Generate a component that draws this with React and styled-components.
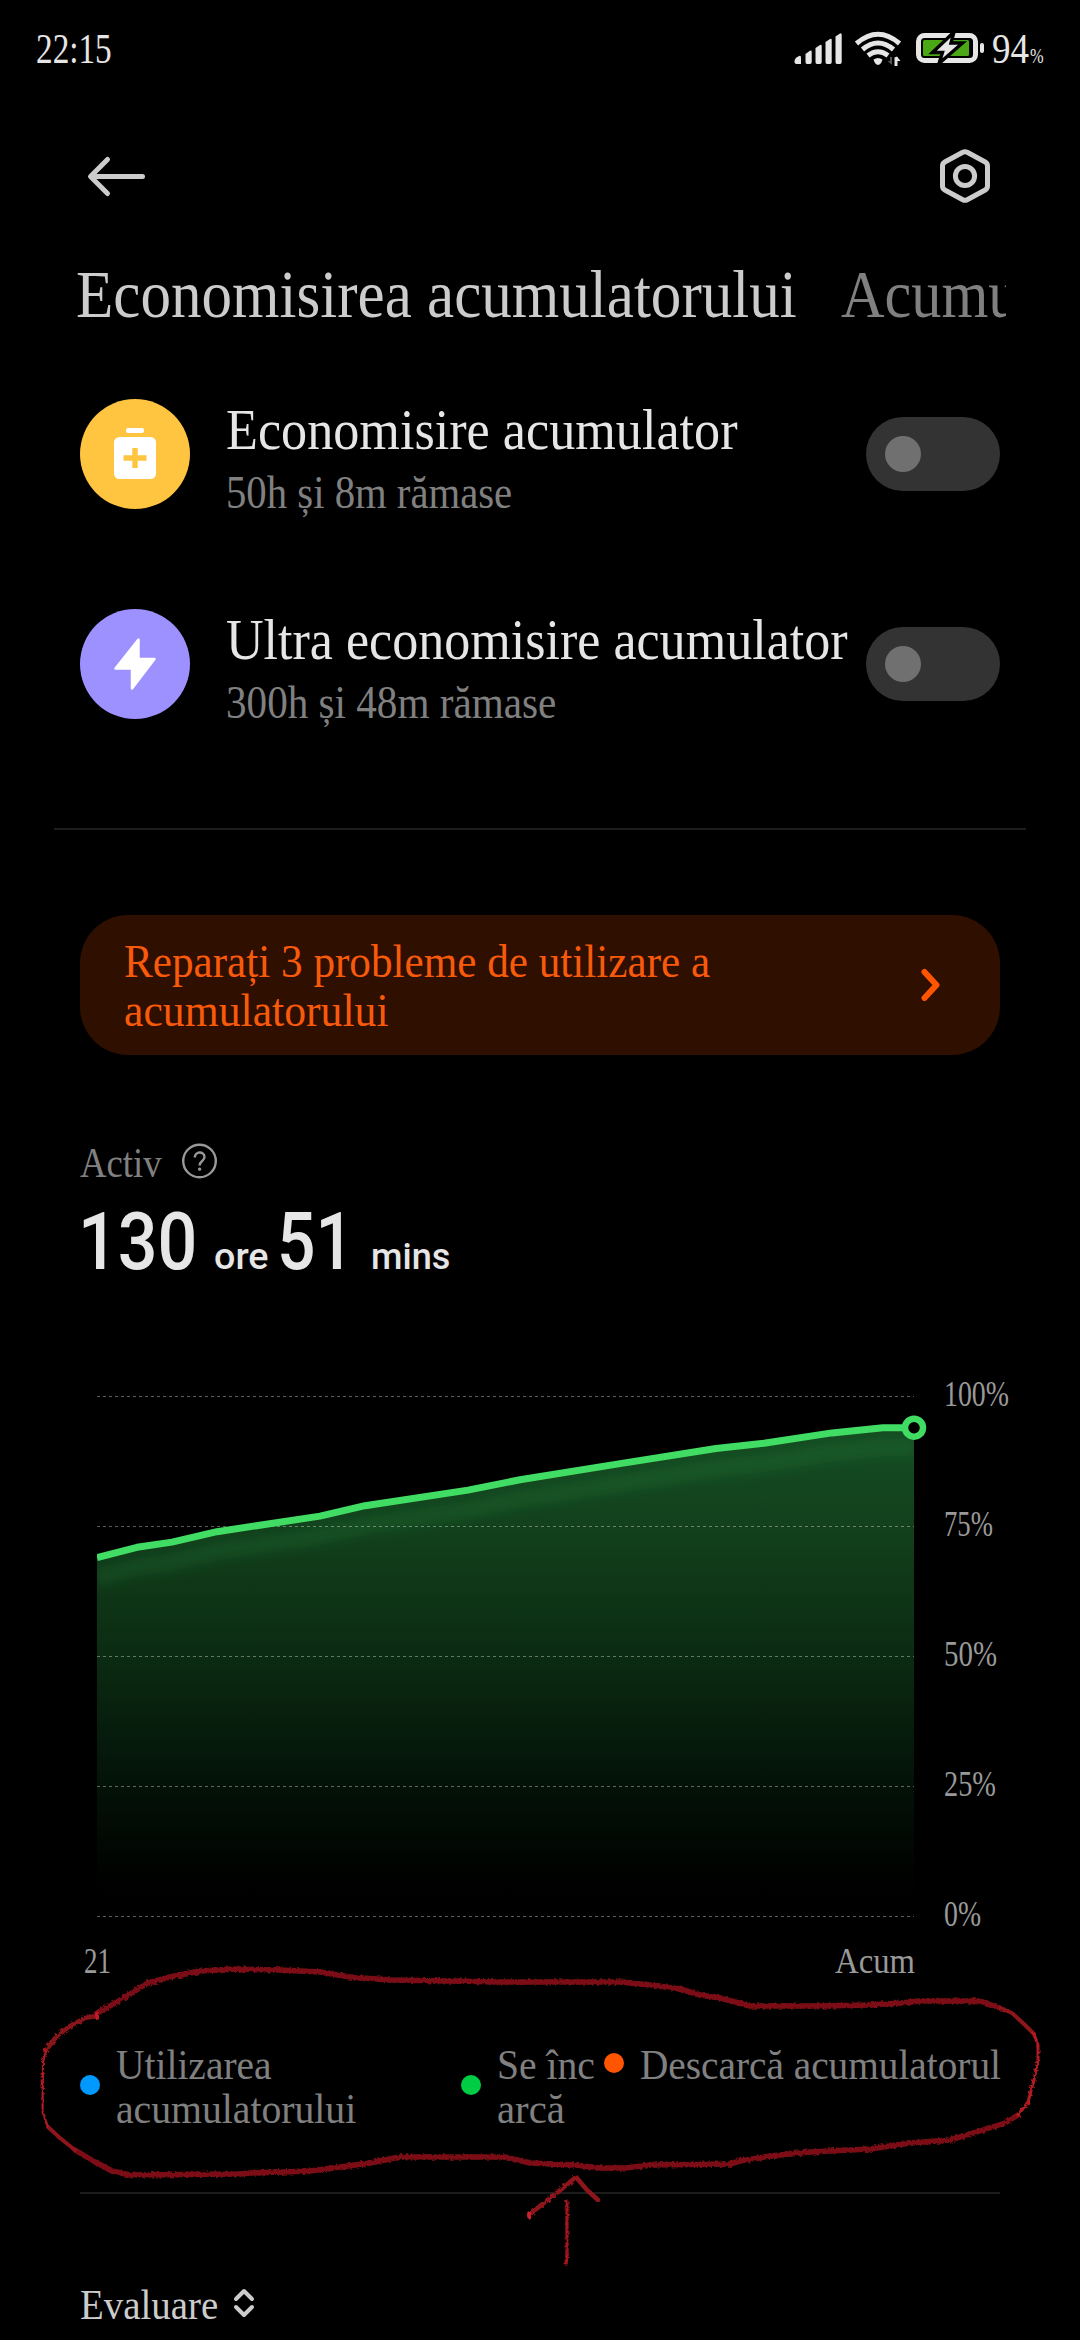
import React, { useLayoutEffect, useRef, useState } from 'react';
import styled, { createGlobalStyle } from 'styled-components'


const GlobalStyle = createGlobalStyle`
  * {
    box-sizing: border-box;
  }
  body {
    margin: 0;
    background: #000;
  }
`;

const Screen = styled.div`
  position: relative;
  width: 1080px;
  height: 2340px;
  overflow: hidden;
  display: flex;
  flex-direction: column;
  background: #000;
  color: #ccc;
  font-family: "Liberation Serif", serif;
`;

const FitBox = styled.div`
  flex: none;
  width: ${({ $width }) => $width}px;
  font-size: ${({ $size }) => $size}px;
  line-height: ${({ $line }) => $line}px;
  color: ${({ $color }) => $color || 'inherit'};
  white-space: nowrap;

  span {
    display: inline-block;
    transform-origin: left center;
  }
`;

// condenses a line of text to a given width
const Fit = ({ width, size, line, color, children }) => {
  const ref = useRef(null)
  const [scale, setScale] = useState(1)

  useLayoutEffect(() => {
    setScale(width / ref.current.offsetWidth)
  }, [width, children])

  return (
    <FitBox $width={width} $size={size} $line={line} $color={color}>
      <span ref={ref} style={{ transform: `translateY(1.5px) scaleX(${scale})` }}>{children}</span>
    </FitBox>
  )
}

const StatusBar = styled.div`
  flex: none;
  display: flex;
  align-items: center;
  justify-content: space-between;
  height: 94px;
  padding: 0 36px;
  color: #e6e6e6;
`;

const StatusRight = styled.div`
  display: flex;
  align-items: center;
  gap: 7px;
`;

const Percent = styled.div`
  display: flex;
  align-items: baseline;
  gap: 1px;
`;

const Header = styled.header`
  flex: none;
  display: flex;
  align-items: center;
  justify-content: space-between;
  height: 159px;
  padding: 5px 89px 0 86px;

  svg {
    display: block;
  }
`;

const Tabs = styled.nav`
  flex: none;
  display: flex;
  gap: 44px;
  height: 79px;
  margin: 0 74px 0 76px;
  overflow: hidden;
`;

const Modes = styled.div`
  flex: none;
  display: flex;
  flex-direction: column;
  gap: 100px;
  padding: 67px 80px 0;
`;

const ModeRow = styled.div`
  display: flex;
  align-items: center;
  height: 110px;
`;

const ModeIcon = styled.div`
  width: 110px;
  height: 110px;
  border-radius: 50%;
  background: ${({ $color }) => $color};
`;

const ModeText = styled.div`
  align-self: flex-start;
  display: flex;
  flex-direction: column;
  gap: 9px;
  margin-left: 36px;
`;

const Toggle = styled.div`
  display: flex;
  align-items: center;
  width: 134px;
  height: 74px;
  margin-left: auto;
  padding-left: 19px;
  border-radius: 37px;
  background: #333;

  &::before {
    content: '';
    width: 36px;
    height: 36px;
    border-radius: 50%;
    background: #707070;
  }
`;

const Divider = styled.div`
  flex: none;
  height: 2px;
  margin: ${({ $margin }) => $margin};
  background: #1c1c1c;
`;

const Warning = styled.div`
  flex: none;
  display: flex;
  align-items: center;
  justify-content: space-between;
  height: 140px;
  margin: 85px 80px 0;
  padding: 0 57px 3px 44px;
  border-radius: 48px;
  background: #2e0f00;
  color: #f85a0c;
`;

const ActiveRow = styled.div`
  flex: none;
  display: flex;
  align-items: center;
  gap: 20px;
  height: 46px;
  margin-top: 83px;
  padding-left: 80px;
`;

const Duration = styled.div`
  flex: none;
  display: flex;
  align-items: baseline;
  height: 84px;
  margin-top: 14px;
  padding-left: 78px;
  color: #e6e6e6;
  font-family: Roboto, sans-serif;
  font-weight: 500;
`;

const Unit = styled.div`
  padding: 0 ${({ $after }) => $after}px 0 17px;
`;

const Chart = styled.div`
  flex: none;
  display: flex;
  height: 560px;
  margin-top: 90px;
  padding-left: 80px;
`;

const Scale = styled.div`
  display: flex;
  flex-direction: column;
  justify-content: space-between;
  color: #999;
`;

const TimeAxis = styled.div`
  flex: none;
  display: flex;
  justify-content: space-between;
  padding: 0 165px 0 84px;
  color: #999;
`;

const Legend = styled.div`
  flex: none;
  display: grid;
  grid-template-columns: 381px 143px 1fr;
  align-items: start;
  margin-top: 54px;
  padding: 0 79px 0 80px;
  color: #808080;
`;

const LegendItem = styled.div`
  display: flex;
  align-items: center;
  gap: 16px;

  &::before {
    content: '';
    flex: none;
    width: 20px;
    height: 20px;
    border-radius: 50%;
    background: ${({ $color }) => $color};
  }
`;

const SortRow = styled.div`
  flex: none;
  display: flex;
  align-items: center;
  gap: 15px;
  margin-top: 84px;
  padding-left: 80px;
`;

const Marker = styled.svg`
  position: absolute;
  left: 0;
  top: 1940px;
  pointer-events: none;
`;


const StatusIcons = () => (
  <svg width="192" height="40" viewBox="794 27 192 40">
    <g fill="#e6e6e6">
      <path d="M795.5 61 Q795.5 59 797.5 57.5 L800 56 Q802 55 802 57.5 V64 H797.5 Q795.5 64 795.5 62Z" />
      <path d="M806.5 54 L811 50.8 Q812.7 50 812.7 52 V62 Q812.7 64 811 64 H808 Q806.5 64 806.5 62Z" />
      <path d="M816.5 48 L821 45 Q822.7 44.2 822.7 46 V62 Q822.7 64 821 64 H818 Q816.5 64 816.5 62Z" />
      <path d="M826.5 42 L831 39 Q832.7 38.2 832.7 40 V62 Q832.7 64 831 64 H828 Q826.5 64 826.5 62Z" />
      <path d="M836.5 36.5 L841 33.5 Q842.7 32.7 842.7 35 V62 Q842.7 64 841 64 H838 Q836.5 64 836.5 62Z" />
      <path d="M874.5 59.5 Q879 56.5 883.5 59.5 Q882 64.5 879 65 Q876 64.5 874.5 59.5Z" />
      <path d="M898 56.5 L901.5 61 H898.5 V66 H895.5 V57.5Z" />
      <rect x="981" y="43" width="4" height="10" rx="2" />
    </g>
    <path d="M893 57 V65 L888.5 61 H891 V57Z" fill="#555" />
    <g fill="none" stroke="#e6e6e6" strokeWidth="5">
      <path d="M857.5 43.5 Q879 25 900.5 43.5" />
      <path d="M863.5 49.5 Q879 36.5 894.5 49.5" />
      <path d="M869 55.5 Q879 48 889 55.5" />
    </g>
    <rect x="919.5" y="35.5" width="57" height="25" rx="6" fill="none" stroke="#e6e6e6" strokeWidth="5" />
    <rect x="924" y="40" width="46" height="16" rx="1.5" fill="#49a813" />
    <path d="M955 32 L933.5 52.5 H943.5 L940 63.5 L963.5 43 H952Z" fill="#e6e6e6" stroke="#000" strokeWidth="3.4" />
  </svg>
)

const BackIcon = () => (
  <svg width="60" height="44" viewBox="86 154 60 44" fill="none" stroke="#ccc" strokeWidth="5" strokeLinecap="round" strokeLinejoin="round">
    <path d="M107.5 159.5 L90.5 176.5 L107.5 193.5 M91 176.5 H142.5" />
  </svg>
)

const SettingsIcon = () => (
  <svg width="52" height="56" viewBox="938 148 52 56" fill="none" stroke="#ccc" strokeWidth="5">
    <path d="M961.8 152.3 Q964 151.1 966.2 152.3 L984.2 162 Q986.5 163.3 986.5 166 V186 Q986.5 188.7 984.2 190 L966.2 199.7 Q964 200.9 961.8 199.7 L943.8 190 Q941.5 188.7 941.5 186 V166 Q941.5 163.3 943.8 162Z" />
    <circle cx="964" cy="176" r="9.6" />
  </svg>
)

const SaverGlyph = () => (
  <svg width="110" height="110">
    <rect x="46" y="29" width="18" height="5" rx="2" fill="#fff" />
    <rect x="34" y="38" width="42" height="42" rx="5.5" fill="#fff" />
    <path d="M43.5 59 H66.5 M55 49 V69" stroke="#ffc540" strokeWidth="5.4" />
  </svg>
)

const BoltGlyph = () => (
  <svg width="110" height="110">
    <path d="M58.5 30.5 V50 H74.5 L52 79.5 V59.5 H35.5Z" fill="#fff" stroke="#fff" strokeWidth="2.5" strokeLinejoin="round" />
  </svg>
)

const modes = [
  {
    title: 'Economisire acumulator', titleWidth: 512,
    left: '50h și 8m rămase', leftWidth: 286,
    color: '#ffc540', icon: <SaverGlyph />,
  },
  {
    title: 'Ultra economisire acumulator', titleWidth: 622,
    left: '300h și 48m rămase', leftWidth: 330,
    color: '#9c91ff', icon: <BoltGlyph />,
  },
]

const scale = [['100%', 65], ['75%', 49], ['50%', 53], ['25%', 52], ['0%', 37]]

// [x in the chart, battery level]
const levels = [
  [17, 69], [57, 71], [92, 72], [137, 74], [240, 77], [285, 79], [388, 82],
  [440, 84], [537, 87], [636, 90], [684, 91], [752, 93], [803, 94], [834, 94],
]

const levelY = (level) => 544.5 - level * 5.2

const LevelChart = () => {
  const line = 'M' + levels.map(([x, level]) => `${x} ${levelY(level)}`).join(' L')
  const area = `${line} V544.5 H17Z`

  return (
    <svg width="864" height="560">
      <defs>
        <linearGradient id="area" gradientUnits="userSpaceOnUse" x1="0" y1="55" x2="0" y2="544">
          <stop offset="0" stopColor="#154d22" />
          <stop offset="0.2" stopColor="#12411c" />
          <stop offset="0.47" stopColor="#0b2b12" />
          <stop offset="0.74" stopColor="#031107" />
          <stop offset="0.93" stopColor="#000100" />
          <stop offset="1" stopColor="#000" />
        </linearGradient>
        <clipPath id="under">
          <path d={area} />
        </clipPath>
        <clipPath id="plot">
          <rect x="17" y="0" width="847" height="560" />
        </clipPath>
        <filter id="soft" x="-10%" y="-30%" width="120%" height="160%">
          <feGaussianBlur stdDeviation="5" />
        </filter>
      </defs>
      <path d={area} fill="url(#area)" />
      <g clipPath="url(#under)">
        <path d={line} transform="translate(0 20)" fill="none" stroke="#3cdc64" strokeOpacity="0.09" strokeWidth="18" filter="url(#soft)" />
      </g>
      {scale.map(([label], i) => (
        <path key={label} d={`M17 ${24.5 + i * 130} H834`} stroke="#fff" strokeOpacity="0.36" strokeDasharray="3 3" />
      ))}
      <path d={line} clipPath="url(#plot)" fill="none" stroke="#41dc64" strokeWidth="7" strokeLinejoin="round" />
      <circle cx="834" cy={levelY(94)} r="9" fill="#000" stroke="#41dc64" strokeWidth="6.5" />
    </svg>
  )
}

// hand drawn loop and arrow over the legend
const RedMarker = () => (
  <Marker width="1080" height="400" viewBox="0 1940 1080 400" fill="none" strokeLinecap="round" strokeLinejoin="round">
    <defs>
      <filter id="rough" filterUnits="userSpaceOnUse" x="0" y="1940" width="1080" height="400">
        <feTurbulence type="fractalNoise" baseFrequency="0.35" numOctaves="2" seed="4" result="noise" />
        <feDisplacementMap in="SourceGraphic" in2="noise" scale="4" />
      </filter>
    </defs>
    <g filter="url(#rough)">
      <path
        d="M97 2013 L110 2006 L130 1994 L148 1983 L170 1977 L200 1971 L235 1969 L280 1970 L320 1972 L350 1977 L390 1980 L450 1981 L500 1982 L620 1982 L650 1985 L680 1989 L700 1995 L720 1998 L750 2006 L820 2006 L870 2005 L900 2003 L920 2001 L980 2001 L1000 2008"
        stroke="#7c1116" strokeWidth="5.5"
      />
      <path
        d="M1018 2115 L1005 2123 L980 2131 L950 2140 L910 2143 L870 2149 L810 2152 L770 2156 L740 2161 L730 2164 L650 2165 L625 2168 L600 2168 L575 2165 L530 2163 L505 2157 L400 2157 L370 2163 L310 2171 L250 2173 L240 2174 L130 2175 L112 2171 L95 2162 L75 2150"
        stroke="#7c1116" strokeWidth="5.5"
      />
      <path d="M96 2016 L85 2018 L70 2026 L57 2036 L46 2050" stroke="#86131a" strokeWidth="4.5" />
      <path d="M1000 2008 L1012 2013 L1025 2025 L1034 2034" stroke="#8c141b" strokeWidth="4" />
      <path d="M75 2150 L60 2138 L48 2127" stroke="#8c141b" strokeWidth="4" />
      <path d="M46 2050 L43 2062 L42.5 2112 L48 2127" stroke="#b01a22" strokeWidth="2.2" />
      <path d="M1034 2034 L1038 2045 L1038 2060 L1034 2080 L1028 2102 L1018 2115" stroke="#b01a22" strokeWidth="3" />
      <path d="M97 2014 V2018" stroke="#c41c26" strokeWidth="4" />
      <path d="M529 2215 L545 2202 L558 2192 L576 2177 L587 2190 L598 2200" stroke="#8c141b" strokeWidth="4.5" />
      <path d="M529 2213 V2217" stroke="#d0202a" strokeWidth="3.5" />
      <path d="M567 2201 V2255 L566 2264" stroke="#a4181f" strokeWidth="3.2" />
    </g>
  </Marker>
)


const App = () => {

  return (
    <Screen>
      <GlobalStyle />
      <StatusBar>
        <Fit width={76} size={42} line={94}>22:15</Fit>
        <StatusRight>
          <StatusIcons />
          <Percent>
            <Fit width={37} size={43} line={94}>94</Fit>
            <Fit width={14} size={21} line={30}>%</Fit>
          </Percent>
        </StatusRight>
      </StatusBar>

      <Header>
        <BackIcon />
        <SettingsIcon />
      </Header>

      <Tabs>
        <Fit width={721} size={67} line={79}>Economisirea acumulatorului</Fit>
        <Fit width={288} size={67} line={79} color="#808080">Acumulator</Fit>
      </Tabs>

      <Modes>
        {modes.map((mode) => (
          <ModeRow key={mode.title}>
            <ModeIcon $color={mode.color}>{mode.icon}</ModeIcon>
            <ModeText>
              <Fit width={mode.titleWidth} size={58} line={57} color="#e6e6e6">{mode.title}</Fit>
              <Fit width={mode.leftWidth} size={46} line={52} color="#808080">{mode.left}</Fit>
            </ModeText>
            <Toggle />
          </ModeRow>
        ))}
      </Modes>

      <Divider $margin="109px 54px 0" />

      <Warning>
        <div>
          <Fit width={586} size={47} line={49}>Reparați 3 probleme de utilizare a</Fit>
          <Fit width={265} size={47} line={49}>acumulatorului</Fit>
        </div>
        <svg width="24" height="34" fill="none" stroke="#ff5500" strokeWidth="6" strokeLinecap="round" strokeLinejoin="round">
          <path d="M5.5 5 L17.5 18 L5.5 31" />
        </svg>
      </Warning>

      <ActiveRow>
        <Fit width={82} size={43} line={46} color="#808080">Activ</Fit>
        <svg width="36" height="36" fill="none" stroke="#999" strokeWidth="2.4">
          <circle cx="17.5" cy="18" r="16.3" />
          <path d="M12.8 14.5 C12.8 8 22.5 8 22.5 14 C22.5 18 17.6 18 17.6 22.5" />
          <circle cx="17.6" cy="26.2" r="1.6" fill="#999" stroke="none" />
        </svg>
      </ActiveRow>

      <Duration>
        <Fit width={119} size={80} line={84}>130</Fit>
        <Unit $after={8}><Fit width={55} size={37} line={40}>ore</Fit></Unit>
        <Fit width={77} size={80} line={84}>51</Fit>
        <Unit $after={0}><Fit width={79} size={37} line={40}>mins</Fit></Unit>
      </Duration>

      <Chart>
        <LevelChart />
        <Scale>
          {scale.map(([label, width]) => (
            <Fit key={label} width={width} size={36} line={40}>{label}</Fit>
          ))}
        </Scale>
      </Chart>
      <TimeAxis>
        <Fit width={27} size={36} line={55}>21</Fit>
        <Fit width={80} size={36} line={55}>Acum</Fit>
      </TimeAxis>

      <Legend>
        <LegendItem $color="#0099ff">
          <div>
            <Fit width={156} size={42} line={44}>Utilizarea</Fit>
            <Fit width={240} size={42} line={44}>acumulatorului</Fit>
          </div>
        </LegendItem>
        <LegendItem $color="#00cc44">
          <div>
            <Fit width={98} size={42} line={44}>Se înc</Fit>
            <Fit width={68} size={42} line={44}>arcă</Fit>
          </div>
        </LegendItem>
        <LegendItem $color="#ff5500">
          <Fit width={361} size={42} line={44}>Descarcă acumulatorul</Fit>
        </LegendItem>
      </Legend>

      <Divider $margin="63px 80px 0" />

      <SortRow>
        <Fit width={138} size={42} line={50}>Evaluare</Fit>
        <svg width="22" height="32" fill="none" stroke="#ccc" strokeWidth="4" strokeLinecap="round" strokeLinejoin="round">
          <path d="M3 12 L11 4 L19 12 M3 20 L11 28 L19 20" />
        </svg>
      </SortRow>

      <RedMarker />
    </Screen>
  )
}

export default App
